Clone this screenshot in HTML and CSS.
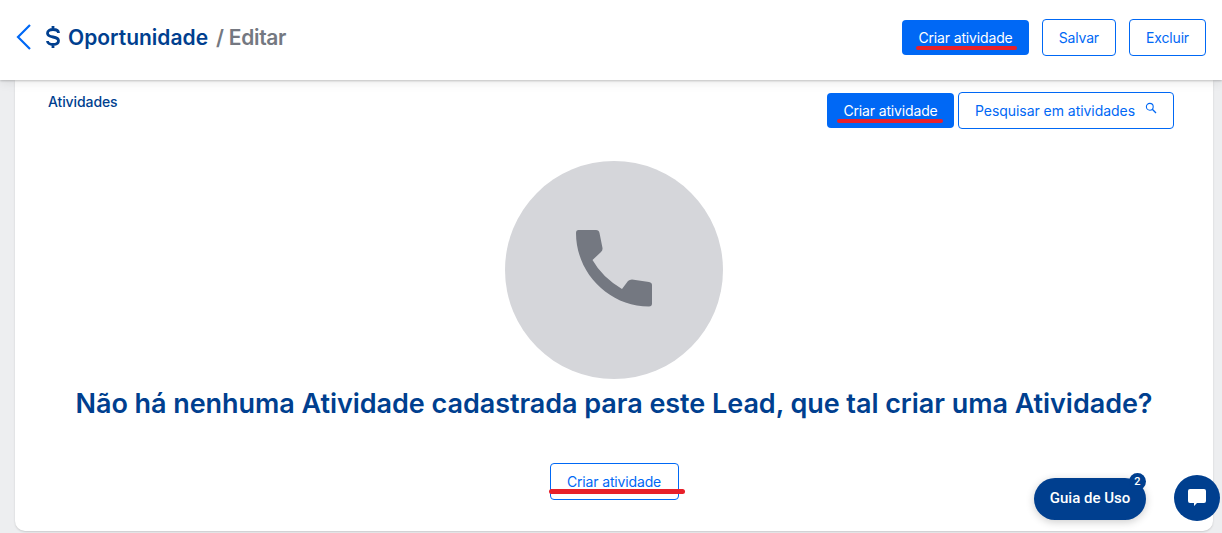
FILE: index.html
```html
<!DOCTYPE html>
<html lang="pt-BR">
<head>
    <meta charset="UTF-8">
    <title>Oportunidade / Editar</title>
    <link rel="stylesheet" href="styles.css">
</head>
<body>
    <header class="topbar">
        <div class="title">
            <svg class="back" width="18" height="26" viewBox="0 0 18 26"><path d="M15 1 L3 13 L15 25" fill="none" stroke="#0068f5" stroke-width="2.200"/></svg>
            <svg class="dollar" width="16" height="24" viewBox="0 0 16 24"><path d="M13.500 8 C13.500 5.500 11 4.500 8 4.500 C5 4.500 2.500 5.800 2.500 8.300 C2.500 11 5 11.500 8 12 C11 12.500 13.500 13.200 13.500 15.800 C13.500 18.200 11 19.500 8 19.500 C5 19.500 2.500 18.400 2.500 16 M8 1 V4.500 M8 19.500 V23" fill="none" stroke="#003f8f" stroke-width="2.800"/></svg>
            <h1>Oportunidade</h1>
            <span class="crumb">/ Editar</span>
        </div>
        <div class="actions">
            <button class="btn solid marked">Criar atividade</button>
            <button class="btn outline">Salvar</button>
            <button class="btn outline">Excluir</button>
        </div>
    </header>

    <main class="card">
        <div class="card-head">
            <h2>Atividades</h2>
            <div class="tools">
                <button class="btn solid marked short">Criar atividade</button>
                <button class="btn outline search">Pesquisar em atividades
                    <svg width="12" height="12" viewBox="0 0 12 12"><circle cx="4.800" cy="4.800" r="3.400" fill="none" stroke="#0068f5" stroke-width="1.100"/><path d="M7.300 7.300 L11 11" stroke="#0068f5" stroke-width="1.300"/></svg>
                </button>
            </div>
        </div>
        <div class="empty">
            <div class="circle">
                <svg width="78" height="78" viewBox="0 0 78 78"><path d="M3.500 1 H21 Q24 1 24.500 4 L27.500 19 Q27.800 21.500 26 23 L17.500 31 Q27 48 47 60 L53 52 Q54.500 50.500 57 50.500 L74 53 Q77 53.500 77 56 V74.500 Q77 77.500 74 77.500 C34 77.500 1 44 1 4 Q1 1 3.500 1 Z" fill="#747881"/></svg>
            </div>
            <p class="msg">Não há nenhuma Atividade cadastrada para este Lead, que tal criar uma Atividade?</p>
            <button class="btn outline marked wide">Criar atividade</button>
        </div>
    </main>

    <div class="guide">Guia de Uso<span class="badge">2</span></div>
    <div class="chat">
        <svg width="20" height="20" viewBox="0 0 20 20"><path d="M3 1 H17 Q19 1 19 3 V13 Q19 15 17 15 H10 L7 18 V15 H3 Q1 15 1 13 V3 Q1 1 3 1 Z" fill="#fff"/></svg>
    </div>
</body>
</html>
```

FILE: styles.css
```css
* {
    box-sizing: border-box;
}
html, body {
    height: 100%;
}
body {
    margin: 0;
    overflow: hidden;
    font-family: Inter, "Noto Sans", sans-serif;
    background-color: #edeef0;
    color: #003f8f;
}
.topbar {
    height: 80px;
    background-color: #fff;
    box-shadow: 0 1px 2px rgba(0, 0, 0, 0.2), 0 3px 10px rgba(0, 0, 0, 0.08);
    display: flex;
    justify-content: space-between;
    align-items: center;
    padding: 0 16px 6px 15px;
    position: relative;
}
.title {
    display: flex;
    align-items: center;
}
.back {
    margin-right: 12px;
}
.dollar {
    margin-right: 7px;
}
h1 {
    margin: 0;
    font-size: 21px;
    font-weight: 600;
    letter-spacing: 0;
}
.crumb {
    margin-left: 8px;
    font-size: 21px;
    font-weight: 600;
    color: #747881;
    letter-spacing: -0.3px;
}
.actions {
    display: flex;
    align-items: center;
    gap: 13px;
}
.btn {
    height: 37px;
    padding: 0 16px;
    border-radius: 4px;
    font-family: inherit;
    font-size: 14px;
    letter-spacing: -0.15px;
    position: relative;
    white-space: nowrap;
}
.btn.solid {
    height: 35px;
    background-color: #0068f5;
    border: none;
    color: #fff;
}
.btn.outline {
    background-color: #fff;
    border: 1px solid #0068f5;
    color: #0068f5;
}
.marked::after {
    content: "";
    position: absolute;
    left: 14px;
    right: 12px;
    bottom: 5px;
    height: 4px;
    border-radius: 2px;
    background-color: #e8202a;
}
.card {
    height: 451px;
    margin: 0 9px 0 15px;
    padding: 12px 39px 0 33px;
    background-color: #fff;
    border-radius: 0 0 10px 10px;
    box-shadow: 0 1px 2px rgba(0, 0, 0, 0.15);
}
.card-head {
    display: flex;
    justify-content: space-between;
    align-items: flex-start;
}
h2 {
    margin: 1px 0 0;
    font-size: 14px;
    font-weight: 500;
    letter-spacing: -0.1px;
}
.tools {
    display: flex;
    align-items: center;
    gap: 4px;
}
.short {
    width: 127px;
}
.short::after {
    left: 10px;
    right: 11px;
}
.search {
    width: 216px;
    letter-spacing: -0.05px;
    text-align: left;
}
.search svg {
    margin-left: 6px;
    vertical-align: 2px;
}
.empty {
    display: flex;
    flex-direction: column;
    align-items: center;
    margin-top: 32px;
    padding-left: 6px;
}
.circle {
    width: 218px;
    height: 218px;
    padding-bottom: 5px;
    border-radius: 50%;
    background-color: #d5d6da;
    display: flex;
    align-items: center;
    justify-content: center;
}
.msg {
    margin: 7px 0 0;
    font-size: 27px;
    line-height: 36px;
    font-weight: 600;
    letter-spacing: -0.05px;
    white-space: nowrap;
}
.wide {
    width: 129px;
    margin-top: 41px;
}
.wide::after {
    left: -2px;
    right: -7px;
    bottom: 5px;
    height: 5px;
    border-radius: 3px;
}
.guide {
    position: absolute;
    left: 1034px;
    top: 478px;
    width: 112px;
    height: 42px;
    padding-bottom: 2px;
    border-radius: 21px;
    background-color: #003f8f;
    color: #fff;
    font-family: Roboto, sans-serif;
    font-size: 15px;
    font-weight: 500;
    display: flex;
    align-items: center;
    justify-content: center;
    box-shadow: 0 2px 8px rgba(0, 0, 0, 0.2);
}
.badge {
    position: absolute;
    right: 0;
    top: -5px;
    width: 17px;
    height: 17px;
    border-radius: 50%;
    background-color: #003f8f;
    font-size: 11px;
    text-align: center;
    line-height: 17px;
}
.chat {
    position: absolute;
    left: 1174px;
    top: 475px;
    width: 46px;
    height: 46px;
    border-radius: 50%;
    background-color: #003f8f;
    display: flex;
    align-items: center;
    justify-content: center;
}
```
